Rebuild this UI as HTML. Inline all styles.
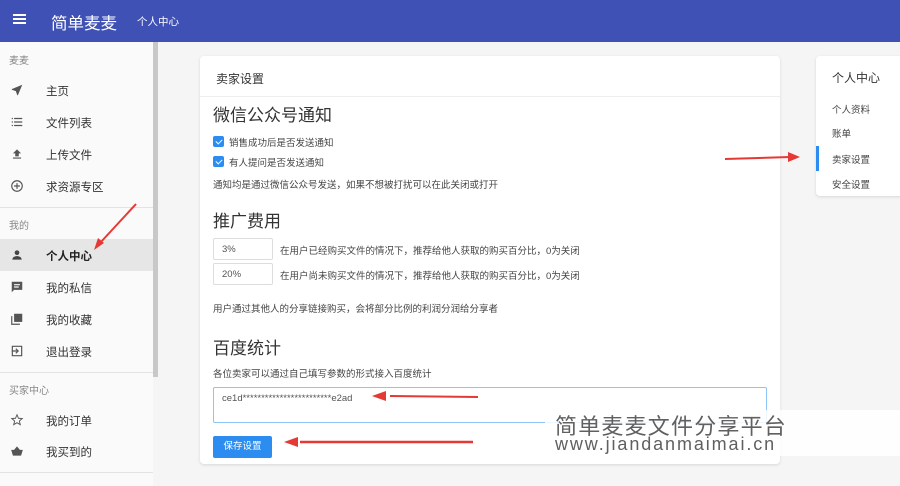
<!DOCTYPE html><html><head><meta charset="utf-8"><style>
*{margin:0;padding:0;box-sizing:border-box}
body{width:900px;height:486px;overflow:hidden;background:#f5f5f5;font-family:"Liberation Sans","Noto Sans CJK SC",sans-serif;position:relative;color:#333}
.hd{position:absolute;left:0;top:0;width:900px;height:42px;background:#3f51b5;color:#fff}
.ab{position:absolute}
.sb{position:absolute;left:0;top:42px;width:153px;height:444px;background:#fafafa}
.sc{position:absolute;left:153px;top:42px;width:5px;height:335px;background:#c8c8c8}
.lab{position:absolute;left:9px;font-size:10px;color:#888}
.it{position:absolute;left:46px;font-size:11.5px;color:#333}
.ic{position:absolute;left:10px;width:14px;height:14px}
.dv{position:absolute;left:0;width:153px;height:1px;background:#e3e3e3}
.card{position:absolute;left:200px;top:56px;width:580px;height:408px;background:#fff;border-radius:4px;box-shadow:0 1px 3px rgba(0,0,0,.12)}
.h2{position:absolute;left:13px;font-size:17px;color:#333}
.t{position:absolute;font-size:9.5px;color:#444;white-space:nowrap}
.cb{position:absolute;left:13px;width:11px;height:11px;background:#2d8cf0;border-radius:2px}
.cb:after{content:"";position:absolute;left:3.5px;top:1.5px;width:3px;height:5px;border:solid #fff;border-width:0 1.5px 1.5px 0;transform:rotate(45deg)}
.inp{position:absolute;left:13px;width:60px;height:22px;border:1px solid #ddd;border-radius:2px;font-size:9.5px;color:#555;padding:5px 8px}
</style></head><body>
<div class="hd">
<div class="ab" style="left:13px;top:14px;width:13px;height:2px;background:#fff;box-shadow:0 4px 0 #fff,0 8px 0 #fff"></div>
<div class="ab" style="left:51px;top:10px;font-size:16.5px">简单麦麦</div>
<div class="ab" style="left:137px;top:14px;font-size:10.5px">个人中心</div>
</div>
<div class="sb">
<div class="lab" style="top:10px">麦麦</div>
<svg class="ic" style="top:41px" viewBox="0 0 24 24"><path d="M21 3L3 10.5v1l7 2.5 2.5 7h1z" fill="#555"/></svg><div class="it" style="top:41px">主页</div>
<svg class="ic" style="top:73px" viewBox="0 0 24 24"><path d="M3 5h2v2H3zm4 0h14v2H7zM3 11h2v2H3zm4 0h14v2H7zM3 17h2v2H3zm4 0h14v2H7z" fill="#555"/></svg><div class="it" style="top:73px">文件列表</div>
<svg class="ic" style="top:105px" viewBox="0 0 24 24"><path d="M5 18h14v2H5zm7-14l-7 7h4v5h6v-5h4z" fill="#555"/></svg><div class="it" style="top:105px">上传文件</div>
<svg class="ic" style="top:137px" viewBox="0 0 24 24"><circle cx="12" cy="12" r="9" fill="none" stroke="#555" stroke-width="2"/><path d="M12 7v10M7 12h10" stroke="#555" stroke-width="2"/></svg><div class="it" style="top:137px">求资源专区</div>
<div class="dv" style="top:165px"></div>
<div class="lab" style="top:175px">我的</div>
<div class="ab" style="left:0;top:197px;width:153px;height:32px;background:#e6e6e6"></div>
<svg class="ic" style="top:206px" viewBox="0 0 24 24"><circle cx="12" cy="8" r="4" fill="#444"/><path d="M4 20c0-4 4-6 8-6s8 2 8 6z" fill="#444"/></svg><div class="it" style="top:206px;font-weight:bold;color:#222">个人中心</div>
<svg class="ic" style="top:238px" viewBox="0 0 24 24"><path d="M3 3h18v14H7l-4 4z" fill="#555"/><path d="M7 8h10M7 12h8" stroke="#fafafa" stroke-width="2"/></svg><div class="it" style="top:238px">我的私信</div>
<svg class="ic" style="top:270px" viewBox="0 0 24 24"><path d="M7 3h14v14H7z" fill="#555"/><path d="M3 7v14h14" fill="none" stroke="#555" stroke-width="2"/></svg><div class="it" style="top:270px">我的收藏</div>
<svg class="ic" style="top:302px" viewBox="0 0 24 24"><path d="M4 4h16v16H4z" fill="none" stroke="#555" stroke-width="2"/><path d="M3 12h10M10 8l4 4-4 4" fill="none" stroke="#555" stroke-width="2"/></svg><div class="it" style="top:302px">退出登录</div>
<div class="dv" style="top:330px"></div>
<div class="lab" style="top:340px">买家中心</div>
<svg class="ic" style="top:371px" viewBox="0 0 24 24"><path d="M12 3l2.6 6 6.4.5-4.9 4.2 1.5 6.3L12 16.6 6.4 20l1.5-6.3L3 9.5 9.4 9z" fill="none" stroke="#555" stroke-width="1.6"/></svg><div class="it" style="top:371px">我的订单</div>
<svg class="ic" style="top:402px" viewBox="0 0 24 24"><path d="M2 10h20l-3 10H5z M7 10l5-6 5 6" fill="#555"/></svg><div class="it" style="top:402px">我买到的</div>
<div class="dv" style="top:430px"></div>
</div>
<div class="sc"></div>
<div class="card">
<div class="ab" style="left:16px;top:14px;font-size:12px;color:#333">卖家设置</div>
<div class="ab" style="left:0;top:40px;width:580px;height:1px;background:#eee"></div>
<div class="h2" style="top:45px">微信公众号通知</div>
<div class="cb" style="top:80px"></div><div class="t" style="left:29px;top:79px">销售成功后是否发送通知</div>
<div class="cb" style="top:100px"></div><div class="t" style="left:29px;top:99px">有人提问是否发送通知</div>
<div class="t" style="left:13px;top:121px">通知均是通过微信公众号发送，如果不想被打扰可以在此关闭或打开</div>
<div class="h2" style="top:151px">推广费用</div>
<div class="inp" style="top:182px">3%</div><div class="t" style="left:80px;top:187px">在用户已经购买文件的情况下，推荐给他人获取的购买百分比，0为关闭</div>
<div class="inp" style="top:207px">20%</div><div class="t" style="left:80px;top:212px">在用户尚未购买文件的情况下，推荐给他人获取的购买百分比，0为关闭</div>
<div class="t" style="left:13px;top:245px">用户通过其他人的分享链接购买，会将部分比例的利润分润给分享者</div>
<div class="h2" style="top:278px">百度统计</div>
<div class="t" style="left:13px;top:310px">各位卖家可以通过自己填写参数的形式接入百度统计</div>
<div class="ab" style="left:13px;top:331px;width:554px;height:36px;border:1px solid #8cc4f5;border-radius:2px"></div>
<div class="t" style="left:22px;top:337px;color:#555">ce1d************************e2ad</div>
<div class="ab" style="left:13px;top:380px;width:59px;height:22px;background:#2d8cf0;border-radius:2px;color:#fff;font-size:9.5px;text-align:center;line-height:22px">保存设置</div>
</div>
<div class="ab" style="left:816px;top:56px;width:90px;height:140px;background:#fff;border-radius:4px;box-shadow:0 1px 3px rgba(0,0,0,.12)">
<div class="ab" style="left:16px;top:13px;font-size:12px">个人中心</div>
<div class="t" style="left:16px;top:46px">个人资料</div>
<div class="t" style="left:16px;top:70px">账单</div>
<div class="ab" style="left:0;top:90px;width:3px;height:25px;background:#2d8cf0"></div>
<div class="t" style="left:16px;top:96px">卖家设置</div>
<div class="t" style="left:16px;top:121px">安全设置</div>
</div>
<svg class="ab" style="left:0;top:0" width="900" height="486">
<path d="M136 204L100 243" stroke="#e53935" stroke-width="2"/><path d="M94 250l4-12 6 5z" fill="#e53935"/>
<path d="M725 159L790 157" stroke="#e53935" stroke-width="2"/><path d="M800 157l-12-5v10z" fill="#e53935"/>
<path d="M478 397L390 396" stroke="#e53935" stroke-width="2"/><path d="M372 396l14-5v10z" fill="#e53935"/>
<path d="M473 442L300 442" stroke="#e53935" stroke-width="2.5"/><path d="M284 442l14-5v10z" fill="#e53935"/>
</svg>
<div class="ab" style="left:545px;top:410px;width:355px;height:46px;background:rgba(255,255,255,.85)"></div>
<div class="ab" style="left:555px;top:409px;font-size:22px;color:#606060;letter-spacing:1.2px">简单麦麦文件分享平台</div>
<div class="ab" style="left:555px;top:434px;font-size:18px;color:#606060;letter-spacing:1.9px">www.jiandanmaimai.cn</div>
</body></html>
